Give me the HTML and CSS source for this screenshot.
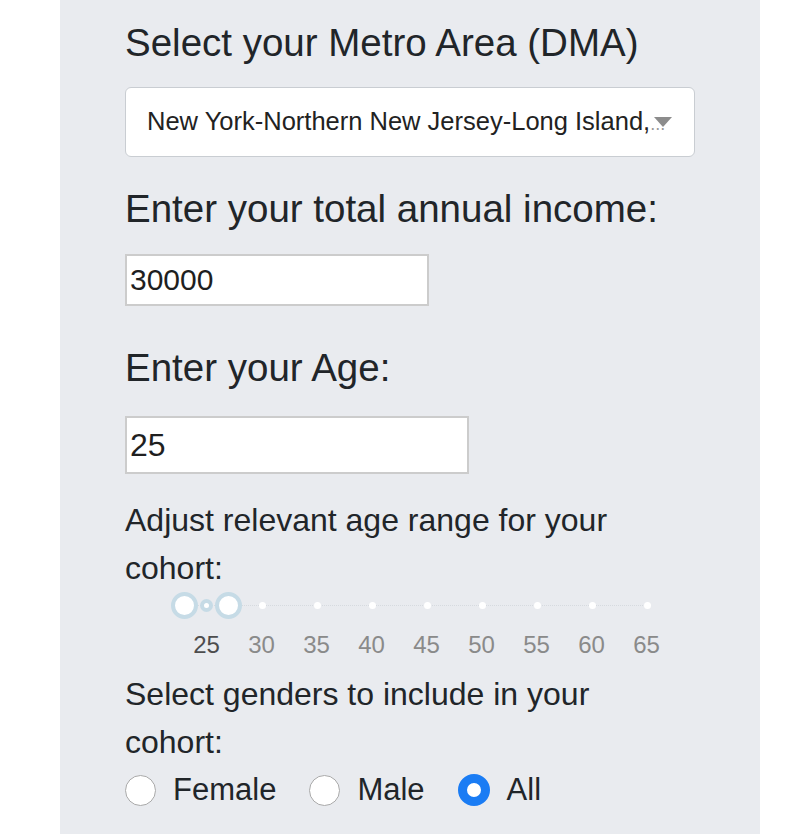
FILE: index.html
```html
<!DOCTYPE html>
<html lang="en">
<head>
<meta charset="utf-8">
<title>Cohort settings</title>
<link rel="stylesheet" href="styles.css">
</head>
<body>
<main class="panel">
  <h2 class="heading heading-first">Select your Metro Area (DMA)</h2>
  <div class="select">
    <span class="select-text">New York-Northern New Jersey-Long Island,<span class="select-more">...</span></span>
    <span class="select-arrow"></span>
  </div>

  <h2 class="heading heading-income">Enter your total annual income:</h2>
  <div class="input input-income">30000</div>

  <h2 class="heading heading-age">Enter your Age:</h2>
  <div class="input input-age">25</div>

  <p class="label label-range">Adjust relevant age range for your cohort:</p>
  <div class="slider">
    <div class="slider-track"></div>
    <span class="tick" style="left:137px"></span>
    <span class="tick" style="left:192px"></span>
    <span class="tick" style="left:247px"></span>
    <span class="tick" style="left:302px"></span>
    <span class="tick" style="left:357px"></span>
    <span class="tick" style="left:412px"></span>
    <span class="tick" style="left:467px"></span>
    <span class="tick" style="left:522px"></span>
    <span class="handle" style="left:59px"></span>
    <span class="handle-mid" style="left:81px"></span>
    <span class="handle" style="left:103px"></span>
    <div class="slider-labels">
      <span class="slider-label slider-label-current">25</span>
      <span class="slider-label">30</span>
      <span class="slider-label">35</span>
      <span class="slider-label">40</span>
      <span class="slider-label">45</span>
      <span class="slider-label">50</span>
      <span class="slider-label">55</span>
      <span class="slider-label">60</span>
      <span class="slider-label">65</span>
    </div>
  </div>

  <p class="label label-gender">Select genders to include in your cohort:</p>
  <div class="radios">
    <label class="radio"><span class="radio-dot"></span><span>Female</span></label>
    <label class="radio"><span class="radio-dot"></span><span>Male</span></label>
    <label class="radio"><span class="radio-dot radio-dot-checked"></span><span>All</span></label>
  </div>
</main>
</body>
</html>
```

FILE: styles.css
```css
* {
  box-sizing: border-box;
}

html, body {
  margin: 0;
  padding: 0;
  background: #ffffff;
}

body {
  font-family: "Liberation Sans", Arial, sans-serif;
  color: #212529;
}

.panel {
  margin-left: 60px;
  width: 700px;
  height: 834px;
  background: #e9ebef;
  padding: 20px 0 0 65px;
  display: flex;
  flex-direction: column;
  align-items: flex-start;
  overflow: hidden;
}

.heading {
  margin: 0;
  font-weight: normal;
  font-size: 38.5px;
  line-height: 46px;
  white-space: nowrap;
}

.heading-income {
  margin-top: 29px;
}

.heading-age {
  margin-top: 39px;
}

.select {
  position: relative;
  margin-top: 21px;
  width: 570px;
  height: 70px;
  background: #ffffff;
  border: 1px solid #c9cdd2;
  border-radius: 6px;
  padding: 0 21px 0 21px;
  display: flex;
  align-items: center;
}

.select-text {
  display: block;
  font-size: 25.5px;
  line-height: 30px;
  white-space: nowrap;
  color: #222;
}

.select-more {
  font-size: 18px;
  color: #9a9a9a;
}

.select-arrow {
  position: absolute;
  left: 528px;
  top: 29px;
  width: 0;
  height: 0;
  border-left: 9.5px solid transparent;
  border-right: 9.5px solid transparent;
  border-top: 10px solid #8c8c8c;
}

.input {
  margin-top: 22px;
  background: #ffffff;
  border: 2px solid #cccccc;
  padding-left: 3px;
  display: flex;
  align-items: center;
  color: #1f1f1f;
}

.input-income {
  width: 304px;
  height: 52px;
  font-size: 30px;
}

.input-age {
  margin-top: 25px;
  width: 344px;
  height: 58px;
  font-size: 32px;
}

.label {
  margin: 22px 0 0 0;
  width: 500px;
  font-size: 32px;
  line-height: 48px;
}

.label-gender {
  margin-top: 0;
}

.slider {
  position: relative;
  width: 560px;
  height: 78px;
}

.slider-track {
  position: absolute;
  left: 60px;
  top: 13px;
  width: 462px;
  border-top: 1px dotted #d6dadf;
}

.tick {
  position: absolute;
  top: 10px;
  width: 7px;
  height: 7px;
  margin-left: -3.5px;
  border-radius: 50%;
  background: #ffffff;
}

.handle {
  position: absolute;
  top: 0;
  width: 27px;
  height: 27px;
  margin-left: -13.5px;
  border-radius: 50%;
  background: #ffffff;
  border: 4px solid #c6dbe6;
}

.handle-mid {
  position: absolute;
  top: 7px;
  width: 13px;
  height: 13px;
  margin-left: -6.5px;
  border-radius: 50%;
  background: #ffffff;
  border: 4px solid #c6dbe6;
}

.slider-labels {
  position: absolute;
  left: 54px;
  top: 38px;
  display: flex;
}

.slider-label {
  width: 55px;
  text-align: center;
  font-size: 24px;
  line-height: 30px;
  color: #8a8a8a;
}

.slider-label-current {
  color: #4d4d4d;
}

.radios {
  display: flex;
  align-items: center;
  height: 48px;
  gap: 33px;
}

.radio {
  display: flex;
  align-items: center;
  gap: 17px;
  font-size: 31px;
}

.radio-dot {
  width: 31px;
  height: 31px;
  border-radius: 50%;
  background: #ffffff;
  border: 1.5px solid #a9a9a9;
}

.radio-dot-checked {
  width: 32px;
  height: 32px;
  background: #ffffff;
  border: 9.5px solid #1a7cf4;
}
```
